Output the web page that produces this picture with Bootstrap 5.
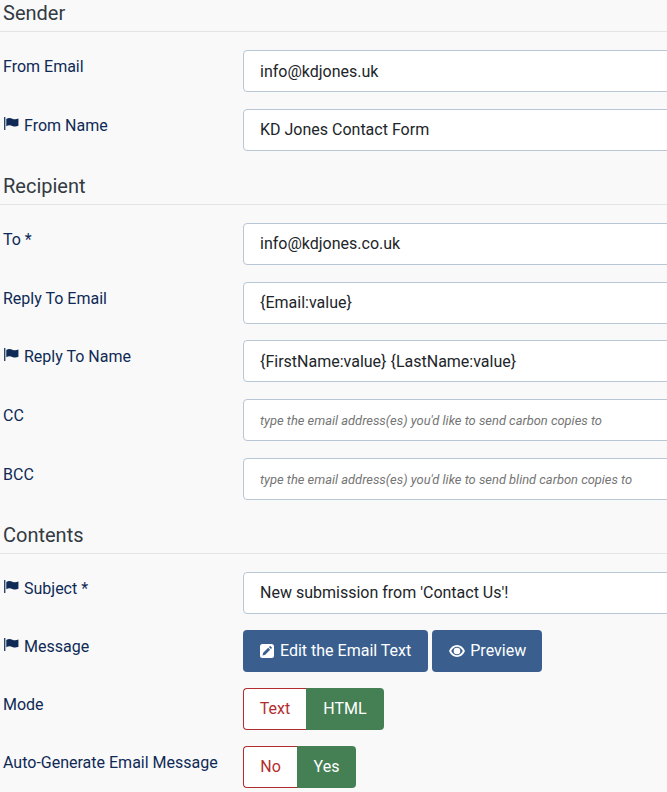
<!DOCTYPE html>
<html lang="en">
<head>
  <meta charset="UTF-8" />
  <title>Email Notification Settings</title>
  <link rel="stylesheet" href="https://cdn.jsdelivr.net/npm/bootstrap@5.3.0/dist/css/bootstrap.min.css"/>
  <style>
    html, body {
      overflow: hidden;
      height: 792px;
    }
    body {
      background: #f9f9fa;
      font-family: Roboto, "Liberation Sans", sans-serif;
      font-size: 16px;
      color: #0e2a55;
    }
    .form-wrap {
      width: 760px;
      margin-top: -5.67px;
      padding-left: 3px;
    }
    .section-title {
      font-size: 20px;
      font-weight: 400;
      line-height: 24px;
      color: #333b42;
      margin: 0 0 18px -3px;
      padding: 6.67px 0 0 3px;
      height: 37.67px;
      border-bottom: 1px solid #e2e4e6;
      box-sizing: border-box;
    }
    .field-row {
      display: flex;
      margin-bottom: 16.67px;
      min-height: 42px;
    }
    .field-row.row-tight {
      margin-bottom: 16px;
    }
    .field-label {
      width: 240px;
      flex: none;
      line-height: 24px;
      margin: 5px 0 0;
      color: #0e2a55;
    }
    .flag-icon {
      width: 15px;
      height: 13px;
      margin-left: 1px;
      margin-right: 5px;
      vertical-align: 1px;
      fill: #0e2a55;
    }
    .field-input {
      width: 500px;
      height: 42px;
      border: 1px solid #b9c6d6;
      border-radius: 4px;
      padding: 6px 16px;
      font-size: 16px;
      color: #212529;
      background: #fff;
    }
    .field-input::placeholder {
      font-size: 12.9px;
      font-style: italic;
      color: #757575;
      opacity: 1;
    }
    .btn-blue {
      height: 42px;
      background: #3a5f8f;
      border: 0;
      border-radius: 4px;
      color: #fff;
      font-size: 16px;
      padding: 0 17px;
      display: inline-flex;
      align-items: center;
    }
    .btn-blue svg {
      fill: #fff;
    }
    .btn-blue.btn-preview { padding-right: 16px; }
    .icon-gap-edit { margin-right: 6px; }
    .icon-gap-eye { margin-right: 5px; }
    .toggle-off, .toggle-on {
      height: 42px;
      font-size: 16px;
      display: inline-flex;
      align-items: center;
      justify-content: center;
    }
    .toggle-off {
      background: #fff;
      color: #b32d2e;
      border: 1px solid #b32d2e;
      border-right: 0;
      border-radius: 4px 0 0 4px;
    }
    .toggle-on {
      background: #458055;
      color: #fff;
      border-radius: 0 4px 4px 0;
    }
    .w-text { width: 63px; }
    .w-html { width: 78px; }
    .w-no { width: 54px; }
    .w-yes { width: 59px; }
  </style>
</head>
<body>
  <svg width="0" height="0" class="position-absolute">
    <symbol id="flag" viewBox="0 0 17 15">
      <rect x="0" y="0" width="1.4" height="15"/>
      <path d="M2.500 2.200C5 .6 7.500 1 9.500 2c2 .9 4.500 1 7-.2v8.400c-2.500 1.200-5 1.100-7 .2-2-1-4.500-1.300-7 .2z"/>
    </symbol>
  </svg>

  <form class="form-wrap">
    <h2 class="section-title">Sender</h2>
    <div class="field-row">
      <label class="field-label">From Email</label>
      <input class="field-input" type="text" value="info@kdjones.uk">
    </div>
    <div class="field-row">
      <label class="field-label"><svg class="flag-icon"><use href="#flag"/></svg>From Name</label>
      <input class="field-input" type="text" value="KD Jones Contact Form">
    </div>

    <h2 class="section-title">Recipient</h2>
    <div class="field-row">
      <label class="field-label">To *</label>
      <input class="field-input" type="text" value="info@kdjones.co.uk">
    </div>
    <div class="field-row">
      <label class="field-label">Reply To Email</label>
      <input class="field-input" type="text" value="{Email:value}">
    </div>
    <div class="field-row">
      <label class="field-label"><svg class="flag-icon"><use href="#flag"/></svg>Reply To Name</label>
      <input class="field-input" type="text" value="{FirstName:value} {LastName:value}">
    </div>
    <div class="field-row">
      <label class="field-label">CC</label>
      <input class="field-input" type="text" placeholder="type the email address(es) you'd like to send carbon copies to">
    </div>
    <div class="field-row">
      <label class="field-label">BCC</label>
      <input class="field-input" type="text" placeholder="type the email address(es) you'd like to send blind carbon copies to">
    </div>

    <h2 class="section-title">Contents</h2>
    <div class="field-row row-tight">
      <label class="field-label"><svg class="flag-icon"><use href="#flag"/></svg>Subject *</label>
      <input class="field-input" type="text" value="New submission from 'Contact Us'!">
    </div>
    <div class="field-row row-tight">
      <label class="field-label"><svg class="flag-icon"><use href="#flag"/></svg>Message</label>
      <div class="d-flex gap-1">
        <button type="button" class="btn-blue">
          <svg width="14" height="14" viewBox="0 0 14 14" class="icon-gap-edit"><path fill-rule="evenodd" d="M2.500 0h9A2.500 2.500 0 0 1 14 2.500v9a2.500 2.500 0 0 1-2.500 2.500h-9A2.500 2.500 0 0 1 0 11.500v-9A2.500 2.500 0 0 1 2.500 0zM8.200 3.800l-5 5L2.500 11.500l2.700-.7 5-5zM8.900 3.100l2 2 .9-.9a.6.6 0 0 0 0-.8l-1.200-1.200a.6.6 0 0 0-.8 0z"/></svg>Edit the Email Text
        </button>
        <button type="button" class="btn-blue btn-preview">
          <svg width="16" height="12" viewBox="0 0 16 12" class="icon-gap-eye"><path fill-rule="evenodd" d="M8 0c3.500 0 6.400 2.200 8 6-1.600 3.800-4.500 6-8 6S1.600 9.800 0 6c1.600-3.800 4.500-6 8-6zM8 1.700C5.700 1.700 3.500 3.400 2.200 6 3.500 8.600 5.700 10.300 8 10.300S12.500 8.600 13.800 6C12.500 3.400 10.300 1.700 8 1.700zM8 2.700a3.300 3.300 0 1 1 0 6.600 3.300 3.300 0 0 1 0-6.600z"/></svg>Preview
        </button>
      </div>
    </div>
    <div class="field-row row-tight">
      <label class="field-label">Mode</label>
      <div class="d-flex">
        <span class="toggle-off w-text">Text</span>
        <span class="toggle-on w-html">HTML</span>
      </div>
    </div>
    <div class="field-row row-tight">
      <label class="field-label">Auto-Generate Email Message</label>
      <div class="d-flex">
        <span class="toggle-off w-no">No</span>
        <span class="toggle-on w-yes">Yes</span>
      </div>
    </div>
  </form>

  <script src="https://cdn.jsdelivr.net/npm/bootstrap@5.3.0/dist/js/bootstrap.bundle.min.js"></script>
</body>
</html>
